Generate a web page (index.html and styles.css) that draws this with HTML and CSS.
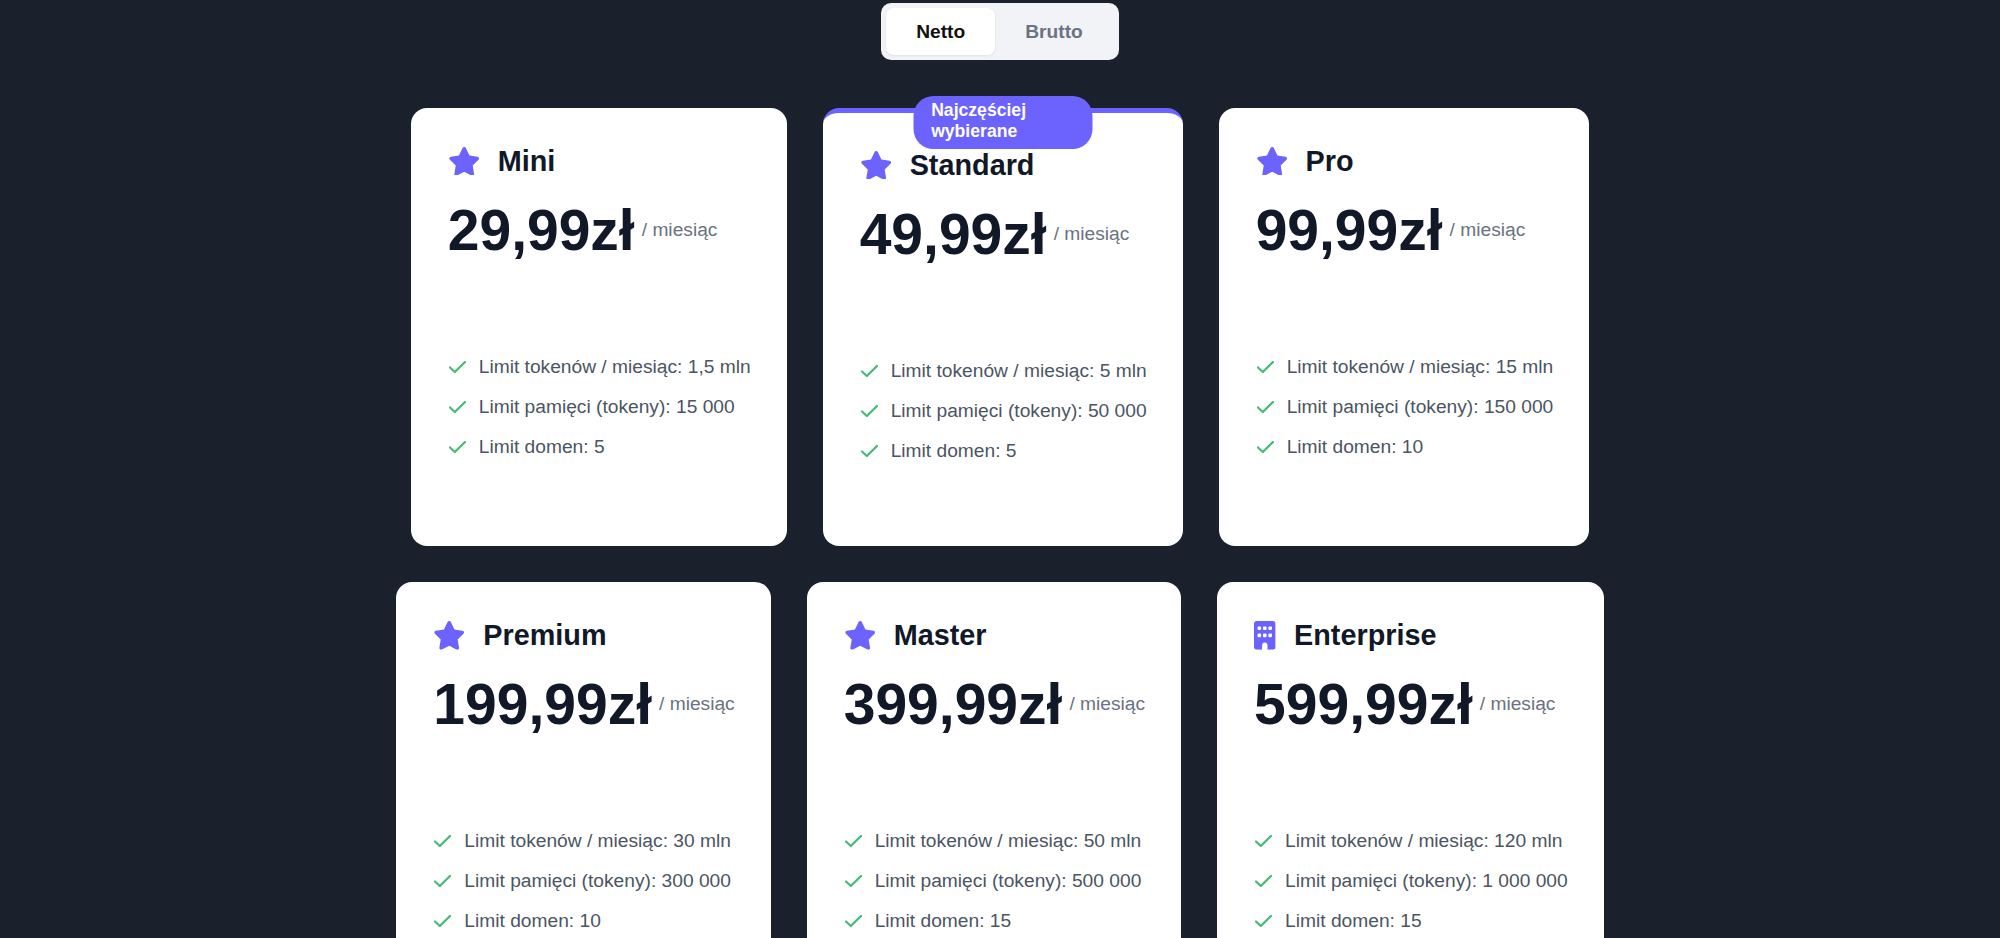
FILE: index.html
```html
<!DOCTYPE html>
<html lang="pl">
<head>
<meta charset="utf-8">
<title>Cennik</title>
<link rel="stylesheet" href="styles.css">
</head>
<body>
<svg class="defs" width="0" height="0" aria-hidden="true">
  <symbol id="star" viewBox="0 0 576 512"><path d="M316.9 18C311.6 7 300.4 0 288.1 0s-23.4 7-28.8 18L195 150.3 51.4 171.5c-12 1.800-22 10.200-25.700 21.700s-.7 24.200 7.900 32.700L137.800 329 113.200 474.700c-2 12 3 24.200 12.900 31.300s23 8 33.800 2.300l128.300-68.500 128.300 68.500c10.800 5.700 23.900 4.900 33.800-2.300s14.900-19.300 12.900-31.300L438.500 329 542.700 225.900c8.600-8.500 11.700-21.200 7.900-32.700s-13.700-19.900-25.700-21.700L381.200 150.300 316.900 18z"/></symbol>
  <symbol id="building" viewBox="0 0 384 512"><path fill-rule="evenodd" d="M48 0C21.500 0 0 21.500 0 48V464c0 26.500 21.500 48 48 48h96V432c0-26.500 21.500-48 48-48s48 21.500 48 48v80h96c26.500 0 48-21.500 48-48V48c0-26.500-21.500-48-48-48H48zM64 240c0-8.800 7.200-16 16-16h32c8.800 0 16 7.200 16 16v32c0 8.800-7.200 16-16 16H80c-8.800 0-16-7.200-16-16V240zm112-16h32c8.800 0 16 7.200 16 16v32c0 8.800-7.200 16-16 16H176c-8.800 0-16-7.200-16-16V240c0-8.800 7.200-16 16-16zm80 16c0-8.800 7.200-16 16-16h32c8.800 0 16 7.200 16 16v32c0 8.800-7.200 16-16 16H272c-8.800 0-16-7.200-16-16V240zM80 96h32c8.800 0 16 7.200 16 16v32c0 8.800-7.200 16-16 16H80c-8.800 0-16-7.200-16-16V112c0-8.800 7.200-16 16-16zm80 16c0-8.800 7.200-16 16-16h32c8.800 0 16 7.200 16 16v32c0 8.800-7.200 16-16 16H176c-8.800 0-16-7.200-16-16V112zM272 96h32c8.800 0 16 7.200 16 16v32c0 8.800-7.200 16-16 16H272c-8.800 0-16-7.200-16-16V112c0-8.800 7.200-16 16-16z"/></symbol>
  <symbol id="check" viewBox="0 0 17 12"><path d="M1 6.500L5.800 11 16 1"/></symbol>
</svg>
<main class="page">
  <div class="toggle">
    <button class="toggle-btn is-active">Netto</button>
    <button class="toggle-btn">Brutto</button>
  </div>
  <section class="plans">
    <article class="card">
      <h2 class="plan-title"><svg class="plan-icon"><use href="#star"/></svg>Mini</h2>
      <p class="price"><span class="amount">29,99zł</span><span class="period">/ miesiąc</span></p>
      <ul class="features">
        <li><svg class="check"><use href="#check"/></svg>Limit tokenów / miesiąc: 1,5 mln</li>
        <li><svg class="check"><use href="#check"/></svg>Limit pamięci (tokeny): 15 000</li>
        <li><svg class="check"><use href="#check"/></svg>Limit domen: 5</li>
      </ul>
    </article>
    <article class="card card-featured">
      <div class="badge">Najczęściej wybierane</div>
      <h2 class="plan-title"><svg class="plan-icon"><use href="#star"/></svg>Standard</h2>
      <p class="price"><span class="amount">49,99zł</span><span class="period">/ miesiąc</span></p>
      <ul class="features">
        <li><svg class="check"><use href="#check"/></svg>Limit tokenów / miesiąc: 5 mln</li>
        <li><svg class="check"><use href="#check"/></svg>Limit pamięci (tokeny): 50 000</li>
        <li><svg class="check"><use href="#check"/></svg>Limit domen: 5</li>
      </ul>
    </article>
    <article class="card">
      <h2 class="plan-title"><svg class="plan-icon"><use href="#star"/></svg>Pro</h2>
      <p class="price"><span class="amount">99,99zł</span><span class="period">/ miesiąc</span></p>
      <ul class="features">
        <li><svg class="check"><use href="#check"/></svg>Limit tokenów / miesiąc: 15 mln</li>
        <li><svg class="check"><use href="#check"/></svg>Limit pamięci (tokeny): 150 000</li>
        <li><svg class="check"><use href="#check"/></svg>Limit domen: 10</li>
      </ul>
    </article>
    <article class="card">
      <h2 class="plan-title"><svg class="plan-icon"><use href="#star"/></svg>Premium</h2>
      <p class="price"><span class="amount">199,99zł</span><span class="period">/ miesiąc</span></p>
      <ul class="features">
        <li><svg class="check"><use href="#check"/></svg>Limit tokenów / miesiąc: 30 mln</li>
        <li><svg class="check"><use href="#check"/></svg>Limit pamięci (tokeny): 300 000</li>
        <li><svg class="check"><use href="#check"/></svg>Limit domen: 10</li>
      </ul>
    </article>
    <article class="card">
      <h2 class="plan-title"><svg class="plan-icon"><use href="#star"/></svg>Master</h2>
      <p class="price"><span class="amount">399,99zł</span><span class="period">/ miesiąc</span></p>
      <ul class="features">
        <li><svg class="check"><use href="#check"/></svg>Limit tokenów / miesiąc: 50 mln</li>
        <li><svg class="check"><use href="#check"/></svg>Limit pamięci (tokeny): 500 000</li>
        <li><svg class="check"><use href="#check"/></svg>Limit domen: 15</li>
      </ul>
    </article>
    <article class="card">
      <h2 class="plan-title"><svg class="plan-icon plan-icon-building"><use href="#building"/></svg>Enterprise</h2>
      <p class="price"><span class="amount">599,99zł</span><span class="period">/ miesiąc</span></p>
      <ul class="features">
        <li><svg class="check"><use href="#check"/></svg>Limit tokenów / miesiąc: 120 mln</li>
        <li><svg class="check"><use href="#check"/></svg>Limit pamięci (tokeny): 1 000 000</li>
        <li><svg class="check"><use href="#check"/></svg>Limit domen: 15</li>
      </ul>
    </article>
  </section>
</main>
</body>
</html>
```
FILE: styles.css
```css
* { box-sizing: border-box; }
html, body { margin: 0; padding: 0; height: 100%; overflow: hidden; }
body { background: #1a202c; font-family: "Liberation Sans", Arial, sans-serif; color: #1a202c; }
.defs { position: absolute; }
.page { display: flex; flex-direction: column; align-items: center; padding-top: 3px; }
.toggle { display: flex; padding: 5px 6px 5px 5px; background: #f1f3f7; border-radius: 10px; }
.toggle-btn { height: 47px; padding: 0 30px; border: 0; border-radius: 8px; background: transparent; color: #6b7280; font: 700 19.200px "Liberation Sans", Arial, sans-serif; }
.toggle-btn.is-active { background: #fff; color: #111; box-shadow: 0 1px 3px rgba(0,0,0,.08); }
.plans { display: flex; flex-wrap: wrap; justify-content: center; gap: 36px; max-width: 1300px; margin-top: 48px; }
.card { position: relative; min-height: 438.400px; padding: 36px 36px 36px 37px; background: #fff; border-radius: 16px; }
.card-featured { padding-top: 35px; border-top: 5px solid #6c63ff; }
.badge { position: absolute; top: -17px; left: 50%; width: 179px; height: 53px; padding: 4px 18px 0; transform: translateX(-50%); background: #6c63ff; color: #fff; border-radius: 20px; font-size: 17.600px; font-weight: 700; line-height: 21px; }
.plan-title { display: flex; align-items: center; margin: 0; font-size: 28.800px; font-weight: 700; line-height: 34px; color: #111827; }
.plan-icon { flex: none; width: 32.400px; height: 28.800px; margin-right: 17.600px; fill: #6c63ff; }
.plan-icon-building { width: 21.600px; margin-right: 18.400px; }
.price { display: flex; align-items: flex-start; height: 152px; margin: 17px 0 0; }
.amount { font-size: 57px; font-weight: 700; line-height: 70px; color: #111827; }
.period { margin: 24px 0 0 7px; font-size: 19.200px; line-height: 22px; color: #6b7280; }
.features { list-style: none; margin: 0; padding: 0; }
.features li { display: flex; align-items: center; height: 40px; font-size: 19.200px; color: #4b5563; white-space: nowrap; }
.check { flex: none; width: 17px; height: 12px; margin: 0 13px 0 1px; fill: none; stroke: #48bb78; stroke-width: 2.300; stroke-linecap: round; stroke-linejoin: round; overflow: visible; }
```
